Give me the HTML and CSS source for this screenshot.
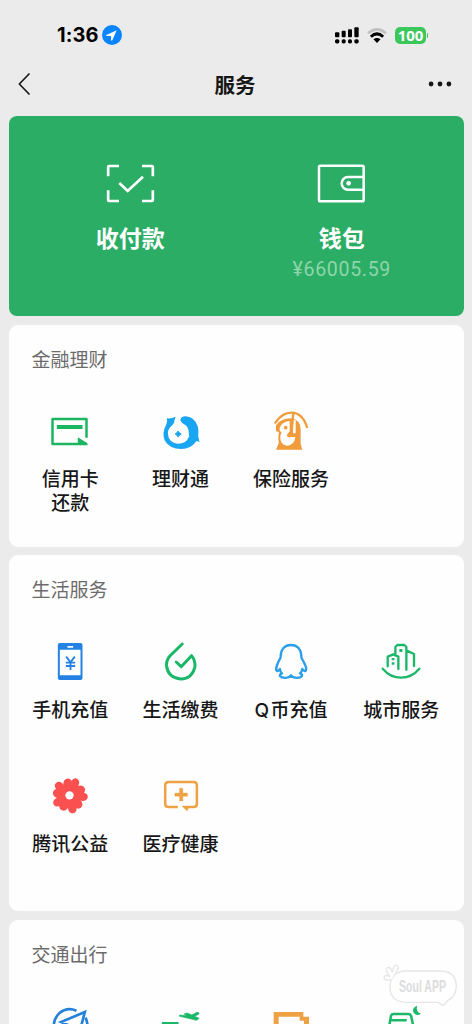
FILE: index.html
```html
<!DOCTYPE html>
<html lang="zh-CN">
<head>
<meta charset="utf-8">
<title>服务</title>
<link rel="stylesheet" href="styles.css">
</head>
<body>
<div class="screen">
  <header class="status">
    <div class="status-left">
      <span class="time">1:36</span>
      <svg class="loc" viewBox="0 0 60 60"><circle cx="30" cy="30" r="30" fill="#0a84ff"/><path d="M44 16 L13 30 Q11 32 14 33 L27 33 L27 45 Q29 49 31 46 Z" fill="#fff"/></svg>
    </div>
    <div class="status-right">
      <svg class="signal" viewBox="0 0 72 50"><g fill="#000"><rect x="0" y="15" width="13" height="15" rx="3"/><rect x="20" y="11" width="12" height="19" rx="3"/><rect x="39" y="6" width="12" height="24" rx="3"/><rect x="58" y="0" width="13" height="30" rx="3"/><rect x="0" y="36" width="13" height="13" rx="5"/><rect x="20" y="36" width="12" height="13" rx="5"/><rect x="39" y="36" width="12" height="13" rx="5"/><rect x="58" y="36" width="13" height="13" rx="5"/></g></svg>
      <svg class="wifi" viewBox="0 0 62 46"><g fill="none" stroke-width="8"><path d="M3 16 Q31 -8 59 16" stroke="#c1c1c1"/><path d="M12 27 Q31 9 50 27" stroke="#000" stroke-width="9"/></g><path d="M20 35 Q31 26 42 35 L31 46 Z" fill="#000"/></svg>
      <div class="battery"><span class="battery-level">100</span><i class="battery-tip"></i></div>
    </div>
  </header>
  <nav class="nav">
    <svg class="back" viewBox="0 0 36 66"><path d="M33 3 L4 33 L33 63" fill="none" stroke="#161616" stroke-width="5" stroke-linecap="round" stroke-linejoin="round"/></svg>
    <h1 class="nav-title">服务</h1>
    <svg class="more" viewBox="0 0 70 16"><g fill="#161616"><circle cx="9" cy="8" r="7"/><circle cx="35" cy="8" r="7"/><circle cx="61" cy="8" r="7"/></g></svg>
  </nav>
  <main class="cards">
    <section class="pay">
      <div class="pay-item">
        <svg class="pay-icon" viewBox="78 38 147 123"><g fill="none" stroke="#fff" stroke-width="8"><path d="M84.500 78V50q0-3 3-3H117M186 47h29.500q3 0 3 3V78M218.500 120v29q0 3-3 3H186M117 152H87.500q-3 0-3-3V120"/><path d="M118 98l25 24 46-43"/></g></svg>
        <span class="pay-label">收付款</span>
      </div>
      <div class="pay-item">
        <svg class="pay-icon" viewBox="141 38 147 123"><g fill="none" stroke="#fff" stroke-width="7.500"><rect x="147" y="46" width="134" height="107" rx="4"/><path d="M281 80H234a19 19 0 0 0 0 38H281"/></g><circle cx="236" cy="99" r="7" fill="#fff"/></svg>
        <span class="pay-label">钱包</span>
        <span class="balance">¥66005.59</span>
      </div>
    </section>

    <section class="card finance">
      <h2 class="card-title">金融理财</h2>
      <div class="grid">
        <div class="item">
          <svg class="icon" viewBox="79.500 204 144 144"><path d="M201 293V237H99V312H176" fill="none" stroke="#1bb65f" stroke-width="7.500" stroke-linejoin="round"/><path d="M112 255h77v12h-77zM175 292l29 18v6h-29z" fill="#1bb65f"/></svg>
          <div class="label"><div>信用卡</div><div>还款</div></div>
        </div>
        <div class="item">
          <svg class="icon" viewBox="5.400 9 144 144"><path d="M35 40Q48 42 61 35Q58 43 57 52Q55 59 48 64Q38 73 38 86Q40 112 68 116Q95 115 99 98L102 96L101 86Q102 63 84 56Q74 49 76 42Q80 33 92 34Q120 37 128 65Q131 78 129 94L133 111L124 108Q107 132 78 132Q44 132 29 107Q19 84 33 59Q38 49 35 40Z" fill="#18a5f2"/><path d="M69 78Q71 84 78 87Q71 90 69 96Q66 90 60 87Q66 84 69 78Z" fill="#18a5f2" stroke="#18a5f2" stroke-width="3"/></svg>
          <span class="label">理财通</span>
        </div>
        <div class="item">
          <svg class="icon" viewBox="111 24 144 144"><path d="M136 68Q157 38 184 38Q217 38 231 81" fill="none" stroke="#f19c3c" stroke-width="7" stroke-linecap="round"/><path d="M138 94V76Q150 56 183 55Q212 60 212 88V132L217 149H138L146 130Q143 110 147 96Z" fill="#f19c3c"/><path d="M149 84Q154 66 179 63V94L172 103L177 111H196Q193 136 171 137Q149 134 151 108L155 97Q148 95 149 84ZM190 60H197V100H189Z" fill="#fefefe"/><path d="M190 40L183 104Q179 113 174 106" fill="none" stroke="#f19c3c" stroke-width="7" stroke-linecap="round"/><circle cx="167" cy="83" r="5.500" fill="#f19c3c"/></svg>
          <span class="label">保险服务</span>
        </div>
      </div>
    </section>

    <section class="card life">
      <h2 class="card-title">生活服务</h2>
      <div class="grid">
        <div class="item">
          <svg class="icon" viewBox="79.500 204 144 144"><path fill-rule="evenodd" d="M121 219H183q6 0 6 6V324q0 6-6 6H121q-6 0-6-6V225q0-6 6-6ZM121 239V316H183V239ZM144 228v5h17v-5Z" fill="#2382e3"/><path d="M140 260l13 17 13-17M153 277V300M139 278H167M139 288H167" fill="none" stroke="#2382e3" stroke-width="5.500"/></svg>
          <span class="label">手机充值</span>
        </div>
        <div class="item">
          <svg class="icon" viewBox="410.400 204 144 144"><path d="M486 222L449 258Q438 271 439 287Q443 324 482 327Q516 326 524 291Q526 270 514 257L483 290L468 276" fill="none" stroke="#1bb768" stroke-width="9" stroke-linecap="round" stroke-linejoin="round"/></svg>
          <span class="label">生活缴费</span>
        </div>
        <div class="item">
          <svg class="icon" viewBox="81 24 144 144"><path d="M153 45C134 45 122 58 122 80C122 86 117 90 114 98Q107 112 109 121C112 127 117 120 120 117Q120 125 126 130Q118 133 120 138C126 146 149 145 153 136C157 145 180 146 186 138Q188 133 180 130Q186 125 187 117C190 120 195 127 198 121Q200 112 192 98C189 90 184 86 184 80C184 58 172 45 153 45Z" fill="none" stroke="#2a9fea" stroke-width="7" stroke-linejoin="round"/></svg>
          <span class="label"><span class="latin">Q</span>币充值</span>
        </div>
        <div class="item">
          <svg class="icon" viewBox="411.900 24 144 144"><g fill="none" stroke="#1bb768" stroke-width="7" stroke-linecap="round" stroke-linejoin="round"><path d="M444 109V80L461 73L476 80V117M467 70V51L473 45H494L500 51V119M501 62L523 72V108"/><path d="M429 116Q452 143 484 143Q516 143 539 116"/></g><path d="M456 84h8v7h-8zM456 97h8v7h-8zM479 57h9v9h-9z" fill="#1bb768"/></svg>
          <span class="label">城市服务</span>
        </div>
        <div class="item">
          <svg class="icon" viewBox="79.500 21 144 144"><g fill="#fa5050"><g id="petal"><path d="M150 91L133 70Q128 49 138 43Q149 37 156 47Q163 36 173 41Q182 47 178 59L168 77Z"/></g><use href="#petal" transform="rotate(72 150 91)"/><use href="#petal" transform="rotate(144 150 91)"/><use href="#petal" transform="rotate(216 150 91)"/><use href="#petal" transform="rotate(288 150 91)"/><circle cx="150" cy="91" r="30"/></g><circle cx="150" cy="91" r="12.500" fill="#fff"/></svg>
          <span class="label">腾讯公益</span>
        </div>
        <div class="item">
          <svg class="icon" viewBox="410.400 21 144 144"><path d="M473 126H445Q435 126 435 116V61Q435 51 445 51H520Q530 51 530 61V116Q530 126 520 126H502" fill="none" stroke="#efa243" stroke-width="7.500"/><path d="M478 70h10v14h14v10h-14v14h-10v-14h-14v-10h14zM485 123H506L501 138Z" fill="#efa243" stroke="#efa243"/></svg>
          <span class="label">医疗健康</span>
        </div>
      </div>
    </section>

    <section class="card travel">
      <h2 class="card-title">交通出行</h2>
      <div class="grid">
        <div class="item"><svg class="icon" viewBox="139.500 309 144 144"><path d="M231 332Q202 320 179 340Q155 364 167 398M258 353Q265 367 264 386" fill="none" stroke="#2482da" stroke-width="8"/><path d="M256 336L185 366L210 377L238 405Z" fill="none" stroke="#2482da" stroke-width="8"/></svg></div>
        <div class="item"><svg class="icon" viewBox="470.400 309 144 144"><path d="M486 366H535V376H483Z" fill="#1bb768"/><path d="M538 345L560 347L552 342L561 339L575 345L590 337Q600 337 595 343L583 349L597 355L588 361Q570 356 538 349Z" fill="#1bb768" stroke="#1bb768" stroke-width="2"/></svg></div>
        <div class="item"><svg class="icon" viewBox="93 309 144 144"><path d="M113 336H202V350H219V420H204V362H191V350H128V420H113Z" fill="#efa243"/></svg></div>
        <div class="item"><svg class="icon" viewBox="423.900 309 144 144"><path d="M461 400V374L466 347Q468 342 474 342H517Q524 342 526 347L532 374V400M466 361H513" fill="none" stroke="#1bb768" stroke-width="7.500"/><path d="M544 317Q528 323 533 337Q541 350 556 341Q540 337 544 317Z" fill="#1bb768"/></svg></div>
      </div>
    </section>
  </main>
  <div class="watermark">
    <svg class="bubble" viewBox="438 190 228 132"><g fill="#fff" stroke="#e6e6e6" stroke-width="4"><path d="M506 214H616Q661 216 661 261Q659 291 636 302L622 318L606 308H508Q462 305 462 262Q463 218 506 214Z"/><path d="M466 240Q444 244 444 233Q446 223 462 231Q445 211 454 204Q464 201 469 218Q473 193 483 197Q492 203 478 219"/></g></svg>
    <span class="watermark-text">Soul APP</span>
  </div>
</div>
</body>
</html>
```
FILE: styles.css
```css
* { box-sizing: border-box; }
body {
  margin: 0;
  background: #ebebeb;
  color: #171717;
  font-family: "Noto Sans CJK SC", sans-serif;
}
h1, h2 { margin: 0; }
svg { display: block; flex: none; }
.screen { position: relative; height: 1024px; overflow: hidden; }

.status {
  height: 53px;
  padding: 17px 44px 0 57px;
  display: flex;
  justify-content: space-between;
  align-items: center;
}
.status-left, .status-right { display: flex; align-items: center; }
.status-left { gap: 3px; }
.time { font: 700 20px/24px Inter, sans-serif; letter-spacing: 0.1px; color: #000; }
.loc { width: 20px; height: 20px; }
.signal { width: 24px; height: 17px; margin-right: 8px; }
.wifi { width: 20px; height: 15px; margin-right: 8px; }
.battery { display: flex; align-items: center; gap: 1px; }
.battery-level {
  width: 31px;
  height: 17px;
  border-radius: 5px;
  background: #3cc75b;
  color: #fff;
  font: 700 15px/17px "Noto Sans", sans-serif;
  text-align: center;
}
.battery-tip { width: 1px; height: 5px; background: #3cc75b; border-radius: 0 2px 2px 0; }

.nav {
  height: 63px;
  padding: 0 20px 2px 18px;
  display: grid;
  grid-template-columns: 24px 1fr 24px;
  align-items: center;
}
.back { width: 12px; height: 22px; }
.nav-title { font-size: 20.5px; line-height: 30px; font-weight: 700; text-align: center; }
.more { width: 24px; height: 6px; }

.cards { padding: 0 8.500px; display: flex; flex-direction: column; gap: 8.500px; }
.pay {
  height: 200px;
  padding: 46.500px 16px 0;
  border-radius: 8px;
  background: #2bad66;
  color: #fff;
  display: grid;
  grid-template-columns: 1fr 1fr;
}
.pay-item { display: flex; flex-direction: column; align-items: center; }
.pay-icon { width: 49px; height: 41px; }
.pay-label { margin-top: 16px; font-size: 23px; line-height: 34px; font-weight: 700; }
.balance {
  margin-top: 4px;
  font: 400 19.500px/24px Roboto, sans-serif;
  letter-spacing: 0.7px;
  color: #90d5aa;
}

.card { border-radius: 9px; background: #fefefe; padding-top: 22px; }
.finance { height: 222px; }
.life { height: 356px; }
.travel { height: 220px; }
.card-title { padding-left: 23px; font-size: 19px; line-height: 24px; font-weight: 400; color: #6b6b6b; }
.grid {
  padding: 37px 7px 0 6.500px;
  display: grid;
  grid-template-columns: repeat(4, 1fr);
  row-gap: 51.500px;
}
.item { display: flex; flex-direction: column; align-items: center; gap: 10.500px; }
.icon { width: 48px; height: 48px; }
.label { font-size: 19px; line-height: 24px; font-weight: 500; text-align: center; white-space: nowrap; }
.latin { font-family: Inter, sans-serif; line-height: 0; letter-spacing: 1.5px; }

.watermark { position: absolute; left: 382px; top: 963px; width: 76px; height: 44px; }
.bubble { width: 76px; height: 44px; }
.watermark-text {
  position: absolute;
  left: 17px;
  top: 12px;
  font: 700 17px/24px "Liberation Sans", sans-serif;
  color: #dcdcdc;
  white-space: nowrap;
  transform: scaleX(0.62);
  transform-origin: left;
}
```
